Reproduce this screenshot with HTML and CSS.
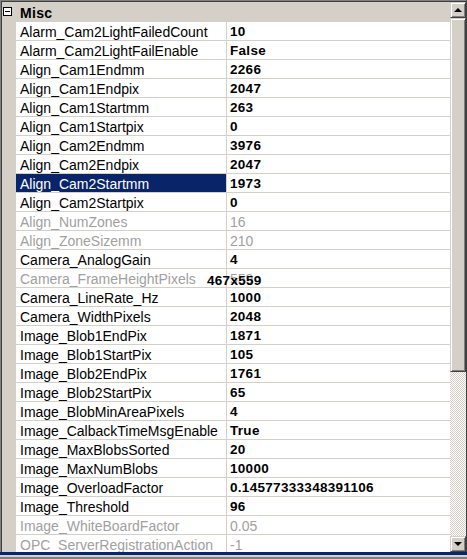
FILE: index.html
```html
<!DOCTYPE html>
<html>
<head>
<meta charset="utf-8">
<link rel="stylesheet" href="styles.css">
</head>
<body>
<div class="window">
  <div class="grid">
    <div class="pane">
      <div class="cat"><span class="toggle"><span class="minus"></span></span><span class="cat-name">Misc</span></div>
      <div class="row"><div class="gut"></div><div class="name">Alarm_Cam2LightFailedCount</div><div class="val b">10</div></div>
      <div class="row"><div class="gut"></div><div class="name">Alarm_Cam2LightFailEnable</div><div class="val b">False</div></div>
      <div class="row"><div class="gut"></div><div class="name">Align_Cam1Endmm</div><div class="val b">2266</div></div>
      <div class="row"><div class="gut"></div><div class="name">Align_Cam1Endpix</div><div class="val b">2047</div></div>
      <div class="row"><div class="gut"></div><div class="name">Align_Cam1Startmm</div><div class="val b">263</div></div>
      <div class="row"><div class="gut"></div><div class="name">Align_Cam1Startpix</div><div class="val b">0</div></div>
      <div class="row"><div class="gut"></div><div class="name">Align_Cam2Endmm</div><div class="val b">3976</div></div>
      <div class="row"><div class="gut"></div><div class="name">Align_Cam2Endpix</div><div class="val b">2047</div></div>
      <div class="row"><div class="gut"></div><div class="name sel">Align_Cam2Startmm</div><div class="val b">1973</div></div>
      <div class="row"><div class="gut"></div><div class="name">Align_Cam2Startpix</div><div class="val b">0</div></div>
      <div class="row ro"><div class="gut"></div><div class="name">Align_NumZones</div><div class="val">16</div></div>
      <div class="row ro"><div class="gut"></div><div class="name">Align_ZoneSizemm</div><div class="val">210</div></div>
      <div class="row"><div class="gut"></div><div class="name">Camera_AnalogGain</div><div class="val b">4</div></div>
      <div class="row ro"><div class="gut"></div><div class="name">Camera_FrameHeightPixels</div><div class="val">559</div></div>
      <div class="row"><div class="gut"></div><div class="name">Camera_LineRate_Hz</div><div class="val b">1000</div></div>
      <div class="row"><div class="gut"></div><div class="name">Camera_WidthPixels</div><div class="val b">2048</div></div>
      <div class="row"><div class="gut"></div><div class="name">Image_Blob1EndPix</div><div class="val b">1871</div></div>
      <div class="row"><div class="gut"></div><div class="name">Image_Blob1StartPix</div><div class="val b">105</div></div>
      <div class="row"><div class="gut"></div><div class="name">Image_Blob2EndPix</div><div class="val b">1761</div></div>
      <div class="row"><div class="gut"></div><div class="name">Image_Blob2StartPix</div><div class="val b">65</div></div>
      <div class="row"><div class="gut"></div><div class="name">Image_BlobMinAreaPixels</div><div class="val b">4</div></div>
      <div class="row"><div class="gut"></div><div class="name">Image_CalbackTimeMsgEnable</div><div class="val b">True</div></div>
      <div class="row"><div class="gut"></div><div class="name">Image_MaxBlobsSorted</div><div class="val b">20</div></div>
      <div class="row"><div class="gut"></div><div class="name">Image_MaxNumBlobs</div><div class="val b">10000</div></div>
      <div class="row"><div class="gut"></div><div class="name">Image_OverloadFactor</div><div class="val b">0.14577333348391106</div></div>
      <div class="row"><div class="gut"></div><div class="name">Image_Threshold</div><div class="val b">96</div></div>
      <div class="row ro"><div class="gut"></div><div class="name">Image_WhiteBoardFactor</div><div class="val">0.05</div></div>
      <div class="row ro"><div class="gut"></div><div class="name">OPC_ServerRegistrationAction</div><div class="val">-1</div></div>
      <div class="dim">467x559</div>
    </div>
    <div class="vscroll">
      <div class="sbtn"><span class="arr up"></span></div>
      <div class="thumb"></div>
      <div class="track"></div>
      <div class="sbtn"><span class="arr down"></span></div>
    </div>
  </div>
  <div class="selbar"></div>
  <div class="base"></div>
</div>
</body>
</html>
```
FILE: styles.css
```css
* { box-sizing: border-box; }
html, body { margin: 0; padding: 0; background: #d4d0c8; }
body { width: 467px; height: 559px; overflow: hidden; font-family: "Liberation Sans", Arial, sans-serif; font-size: 14px; color: #000; }

.window { width: 467px; height: 559px; display: flex; flex-direction: column; }

.grid {
  height: 552px;
  display: flex;
  border-top: 1px solid #808080;
  border-left: 1px solid #808080;
  border-right: 1px solid #404040;
  box-shadow: inset 1px 1px 0 #404040;
  padding: 1px 0 0 1px;
}

.pane { position: relative; width: 448px; height: 550px; overflow: hidden; background: #fff; }

.cat { height: 20px; background: #d4d0c8; display: flex; align-items: flex-start; }
.toggle {
  width: 9px; height: 9px; margin: 5px 0 0 1px;
  border: 1px solid #000; background: #fff;
  display: flex; align-items: center; justify-content: center;
}
.minus { width: 5px; height: 1px; background: #000; }
.cat-name { font-weight: bold; margin-left: 8px; padding-top: 3px; line-height: 16px; letter-spacing: 0.3px; }

.row { display: flex; height: 19px; }
.gut { width: 14px; background: #d4d0c8; }
.name {
  width: 211px; height: 19px;
  padding: 2px 0 0 4px; line-height: 16px;
  border-bottom: 1px solid #d4d0c8; border-right: 1px solid #d4d0c8;
  white-space: nowrap; overflow: hidden; letter-spacing: 0;
}
.name.sel { background: #0a246a; background-clip: padding-box; color: #fff; }
.val {
  flex: 1; height: 19px;
  padding: 2px 0 0 3px; line-height: 16px;
  border-bottom: 1px solid #d4d0c8;
  white-space: nowrap; overflow: hidden; letter-spacing: 0;
}
.val.b { font-weight: bold; font-size: 13.5px; letter-spacing: 0.3px; }
.row.ro .name, .row.ro .val { color: #a0a0a0; }

.dim {
  position: absolute; left: 205px; top: 269px;
  padding-top: 2px; line-height: 16px;
  font-weight: bold; font-size: 13.5px; letter-spacing: 0.3px; color: #000;
}

.vscroll { width: 16px; height: 550px; display: flex; flex-direction: column; }
.sbtn, .thumb {
  background: #d4d0c8;
  border-top: 1px solid #d4d0c8; border-left: 1px solid #d4d0c8;
  border-right: 1px solid #404040; border-bottom: 1px solid #404040;
  box-shadow: inset 1px 1px 0 #fff, inset -1px -1px 0 #808080;
}
.sbtn { height: 16px; display: flex; align-items: center; justify-content: center; }
.thumb { height: 354px; }
.track { flex: 1; background: repeating-conic-gradient(#fff 0 25%, #d4d0c8 0 50%) 0 0 / 2px 2px; }
.arr { width: 0; height: 0; border-left: 4px solid transparent; border-right: 4px solid transparent; }
.arr.up { border-bottom: 4px solid #000; margin-top: -1px; }
.arr.down { border-top: 4px solid #000; }

.selbar { height: 3px; background: #0a246a; }
.base { height: 4px; background: #d4d0c8; border-bottom: 2px solid #808080; }
```
